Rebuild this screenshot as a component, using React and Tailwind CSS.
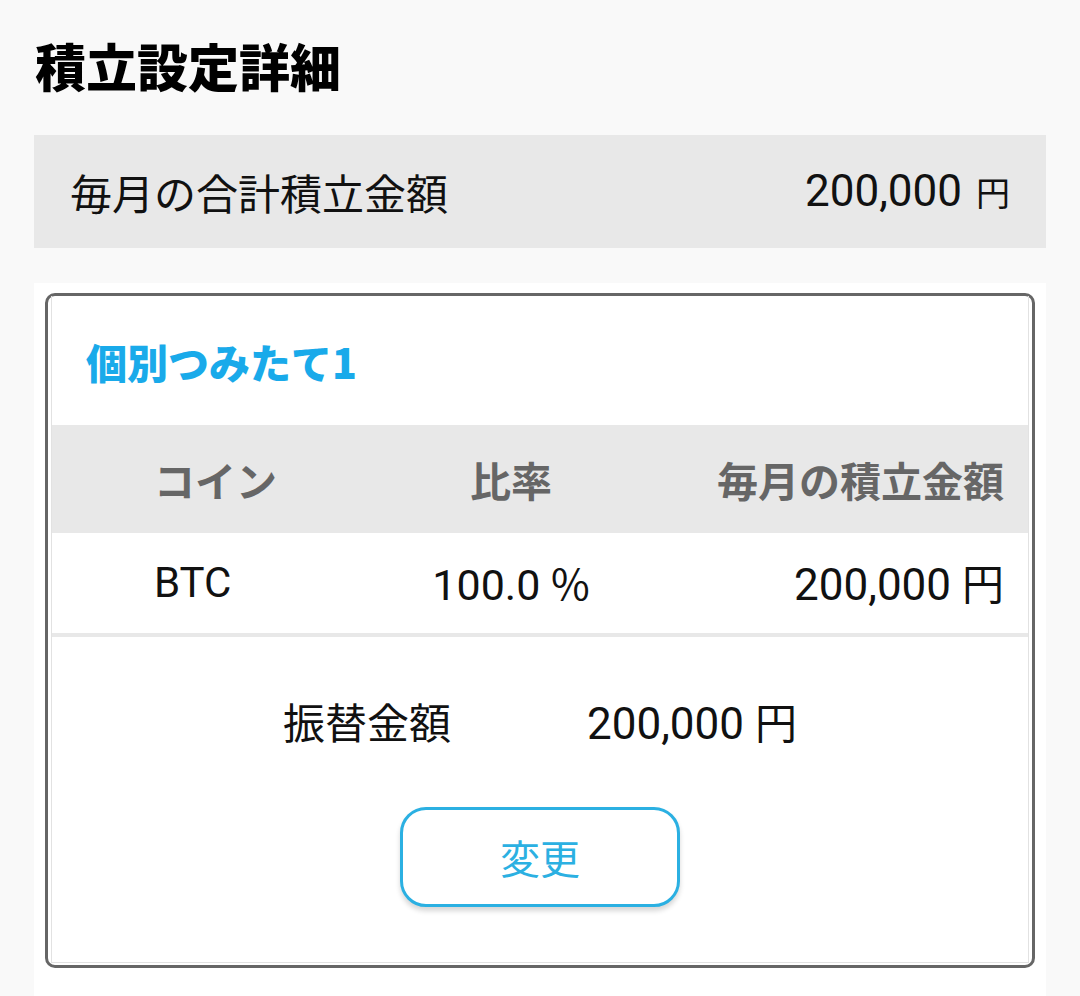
import React from "react";

export default function App() {
  return (
    <div className="min-h-[996px] w-[1080px] bg-[#f9f9f9] overflow-hidden font-['Noto_Sans_CJK_JP',sans-serif]">
      <div className="h-[135px] flex items-center pl-[35px] pb-[6px]">
        <h1 className="text-[51px] leading-[50px] font-black text-black">
          積立設定詳細
        </h1>
      </div>

      <div className="mx-[34px] h-[113px] bg-[#e8e8e8] flex items-center justify-between pl-[36px] pr-[36px]">
        <span className="text-[42px] leading-[50px] text-[#111]">
          毎月の合計積立金額
        </span>
        <span className="flex items-baseline text-[#111]">
          <span className="text-[44px] leading-[50px] font-[Roboto,sans-serif]">200,000</span>
          <span className="text-[34px] leading-[50px] ml-[14px]">円</span>
        </span>
      </div>

      <div className="mx-[34px] mt-[35px] bg-white pt-[10px] px-[11px] pb-[30px]">
        <div className="border-[3px] border-[#666666] rounded-[10px] px-[3px] pb-[2px]">
          <div className="border-x border-b border-[#e2e2e2]">
            <div className="h-[129px] flex items-center pl-[34px]">
              <span className="text-[41px] leading-[50px] font-black text-[#19aaea]">
                個別つみたて1
              </span>
            </div>

            <div className="h-[108px] bg-[#e8e8e8] grid grid-cols-[298px_322px_1fr] items-center text-[41px] leading-[50px] font-bold text-[#666666]">
              <div className="pl-[102px]">コイン</div>
              <div className="text-center">比率</div>
              <div className="text-right pr-[24px]">毎月の積立金額</div>
            </div>

            <div className="h-[104px] border-b-4 border-[#e8e8e8] grid grid-cols-[298px_322px_1fr] items-center text-[42px] leading-[50px] text-[#111]">
              <div className="pl-[102px] font-[Roboto,sans-serif]">BTC</div>
              <div className="text-center">
                <span className="font-[Roboto,sans-serif] text-[43px]">100.0 </span>
                <span>%</span>
              </div>
              <div className="text-right pr-[24px]">
                <span className="font-[Roboto,sans-serif] text-[44px]">200,000 </span>
                <span>円</span>
              </div>
            </div>

            <div className="pt-[59px] flex justify-center gap-[136px] text-[42px] leading-[50px] text-[#111]">
              <span>振替金額</span>
              <span>
                <span className="font-[Roboto,sans-serif] text-[44px]">200,000 </span>
                <span>円</span>
              </span>
            </div>

            <div className="flex justify-center pt-[58px] pb-[55px]">
              <button className="w-[280px] h-[100px] border-[3px] border-[#2bb0e2] rounded-[26px] bg-white text-[#2bb0e2] text-[40px] leading-[50px] shadow-[0_4px_5px_rgba(0,0,0,0.16)]">
                変更
              </button>
            </div>
          </div>
        </div>
      </div>
    </div>
  );
}
